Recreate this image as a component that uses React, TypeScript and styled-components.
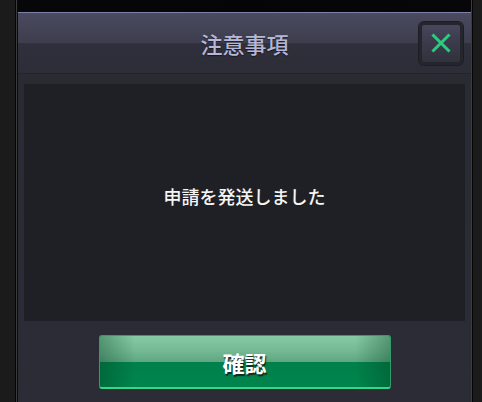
import React from "react";
import styled, { createGlobalStyle } from "styled-components";

const Global = createGlobalStyle`
  html, body { margin: 0; padding: 0; background: #1b1b1b; }
  body { font-family: "Noto Sans CJK JP", "Noto Sans", sans-serif; }
`;

const Screen = styled.div`
  width: 482px;
  height: 402px;
  display: flex;
  padding: 0 9px 0 15px;
  box-sizing: border-box;
  background: #1b1b1b;
`;

const Frame = styled.div`
  flex: 1;
  display: flex;
  flex-direction: column;
  border-left: 1px solid #050505;
  border-right: 1px solid #050505;
  box-shadow: inset 1px 0 0 #3c3c3c, inset -1px 0 0 #3c3c3c;
  padding: 0 1px 0 2px;
  background: #0a0a0c;
`;

const TopStrip = styled.div`
  height: 12px;
  background: linear-gradient(90deg, #07070a 0%, #050508 50%, #07070a 100%);
  flex-shrink: 0;
`;

const Dialog = styled.div`
  flex: 1;
  display: flex;
  flex-direction: column;
  background: linear-gradient(180deg, #2a2a33 0%, #2c2c36 100%);
`;

const Header = styled.div`
  height: 60px;
  display: grid;
  grid-template-columns: 1fr auto 1fr;
  align-items: center;
  border-top: 1px solid #7e7ea6;
  border-bottom: 1px solid #23232b;
  background: linear-gradient(
    180deg,
    #4a4a60 0%,
    #3d3d4e 50%,
    #30303c 51%,
    #2d2d38 100%
  );
  flex-shrink: 0;
`;

const Title = styled.h1`
  grid-column: 2;
  margin: 0;
  font-size: 22px;
  font-weight: 500;
  color: #b6b6d6;
  text-shadow: 0 1px 1px rgba(0, 0, 0, 0.5);
  line-height: 1;
`;

const CloseButton = styled.button`
  grid-column: 3;
  justify-self: end;
  margin-right: 8px;
  width: 44px;
  height: 43px;
  padding: 0;
  border: 3px solid #25252d;
  border-radius: 5px;
  background: linear-gradient(180deg, #47475e 0%, #3a3a4a 50%, #32323d 100%);
  box-shadow: 0 0 0 1px #1d1d23;
  display: flex;
  align-items: center;
  justify-content: center;
  cursor: pointer;
`;

const Body = styled.div`
  padding: 10px 6px 0 6px;
  display: flex;
  flex-direction: column;
  align-items: stretch;
`;

const Panel = styled.div`
  height: 237px;
  box-sizing: border-box;
  padding-bottom: 14px;
  background: #1f2026;
  display: flex;
  align-items: center;
  justify-content: center;
`;

const Message = styled.p`
  margin: 0;
  font-size: 18px;
  font-weight: 500;
  color: #f6f6f6;
  line-height: 1;
`;

const Footer = styled.div`
  display: flex;
  justify-content: center;
  padding-top: 14px;
`;

const ConfirmButton = styled.button`
  width: 292px;
  height: 54px;
  padding: 0;
  border: 1px solid #2f9e68;
  border-bottom: 2px solid #33d88a;
  border-radius: 3px;
  background:
    linear-gradient(90deg, rgba(0, 60, 30, 0.35) 0%, rgba(0, 0, 0, 0) 12%, rgba(0, 0, 0, 0) 88%, rgba(0, 60, 30, 0.35) 100%),
    linear-gradient(180deg, #86caa3 0%, #72b892 30%, #5fa783 50%, #00804a 50.5%, #00854d 100%);
  color: #ffffff;
  font-family: "Noto Sans CJK JP", sans-serif;
  font-size: 22px;
  font-weight: 700;
  text-shadow: 1px 2px 1px rgba(20, 30, 25, 0.9);
  cursor: pointer;
  display: flex;
  align-items: center;
  justify-content: center;
`;

export default function App() {
  return (
    <>
      <Global />
      <Screen>
        <Frame>
          <TopStrip />
          <Dialog>
            <Header>
              <Title>注意事項</Title>
              <CloseButton aria-label="close">
                <svg width="20" height="20" viewBox="0 0 20 20">
                  <path d="M2.5 2.5 L17.5 17.5 M17.5 2.5 L2.5 17.5" stroke="#2ccb7e" strokeWidth="3" strokeLinecap="square" fill="none" />
                </svg>
              </CloseButton>
            </Header>
            <Body>
              <Panel>
                <Message>申請を発送しました</Message>
              </Panel>
            </Body>
            <Footer>
              <ConfirmButton>確認</ConfirmButton>
            </Footer>
          </Dialog>
        </Frame>
      </Screen>
    </>
  );
}
